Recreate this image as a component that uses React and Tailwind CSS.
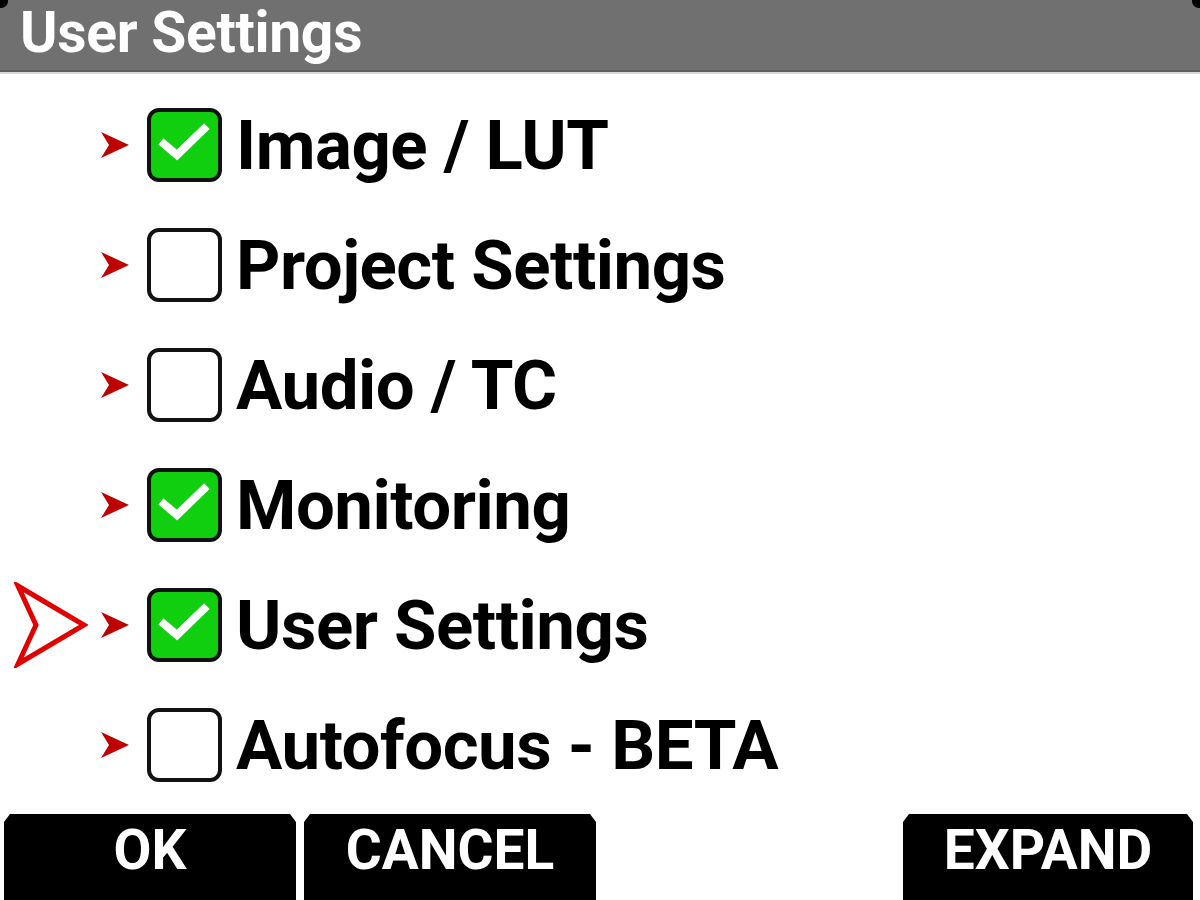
import React from "react";

const items = [
	{ label: "Image / LUT", checked: true },
	{ label: "Project Settings", checked: false },
	{ label: "Audio / TC", checked: false },
	{ label: "Monitoring", checked: true },
	{ label: "User Settings", checked: true, current: true },
	{ label: "Autofocus - BETA", checked: false },
];

const Chevron = () => (
	<svg width="30" height="28" viewBox="0 0 30 28" className="shrink-0">
		<path d="M1 1 L29 14 L1 27 L9 14 Z" fill="#c00000" />
	</svg>
);

const Pointer = () => (
	<svg width="74" height="86" viewBox="0 0 74 86">
		<path
			d="M4 4 L70 43 L4 82 L22 43 Z"
			fill="none"
			stroke="#e00000"
			strokeWidth="5"
			strokeLinejoin="miter"
		/>
	</svg>
);

const Checkbox = ({ checked }) => (
	<div
		className={`w-[75px] h-[74px] rounded-[12px] border-[4px] border-[#111] shrink-0 flex items-center justify-center ${
			checked ? "bg-[#0fcf0f]" : "bg-white"
		}`}
	>
		{checked && (
			<svg width="67" height="66" viewBox="4 4 67 66">
				<path
					d="M17 36 L30 47 L57 21"
					fill="none"
					stroke="white"
					strokeWidth="8"
					strokeLinecap="square"
				/>
			</svg>
		)}
	</div>
);

const Button = ({ children, className }) => (
	<div
		className={`h-[86px] bg-black text-white flex justify-center pt-[8px] text-[55px] font-bold leading-[56px] ${className}`}
		style={{
			fontFamily: "Roboto, sans-serif",
			clipPath:
				"polygon(6px 0, calc(100% - 6px) 0, 100% 8px, 100% 100%, 0 100%, 0 8px)",
		}}
	>
		{children}
	</div>
);

const App = () => {
	return (
		<div className="w-[1200px] h-[900px] bg-white flex flex-col overflow-hidden relative">
			<div className="h-[72px] bg-[#707070] border-b-[2px] border-[#5c5c5c] flex items-center pl-[20px] shrink-0">
				<span
					className="text-white text-[57px] font-bold leading-none tracking-[-0.3px] mt-[-6px]"
					style={{ fontFamily: "Roboto, sans-serif" }}
				>
					User Settings
				</span>
			</div>
			<div className="h-[2px] bg-[#d8d8d8] shrink-0" />
			<div className="flex flex-col pt-[11px]">
				{items.map((item) => (
					<div key={item.label} className="h-[120px] flex items-center">
						<div className="w-[100px] flex justify-center pl-[2px]">
							{item.current && <Pointer />}
						</div>
						<Chevron />
						<div className="w-[17px]" />
						<Checkbox checked={item.checked} />
						<span
							className="ml-[14px] text-black font-bold leading-none text-[69px] tracking-[-0.5px]"
							style={{ fontFamily: "Roboto, sans-serif" }}
						>
							{item.label}
						</span>
					</div>
				))}
			</div>
			<div className="flex items-end mt-auto px-[4px] gap-[8px]">
				<Button className="w-[292px]">OK</Button>
				<Button className="w-[292px]">CANCEL</Button>
				<div className="flex-1" />
				<Button className="w-[290px] mr-[3px]">EXPAND</Button>
			</div>
			<div className="absolute top-[-6px] left-[-6px] w-[14px] h-[14px] rounded-full bg-black" />
			<div className="absolute top-[-6px] right-[-6px] w-[14px] h-[14px] rounded-full bg-black" />
		</div>
	);
};

export default App;
